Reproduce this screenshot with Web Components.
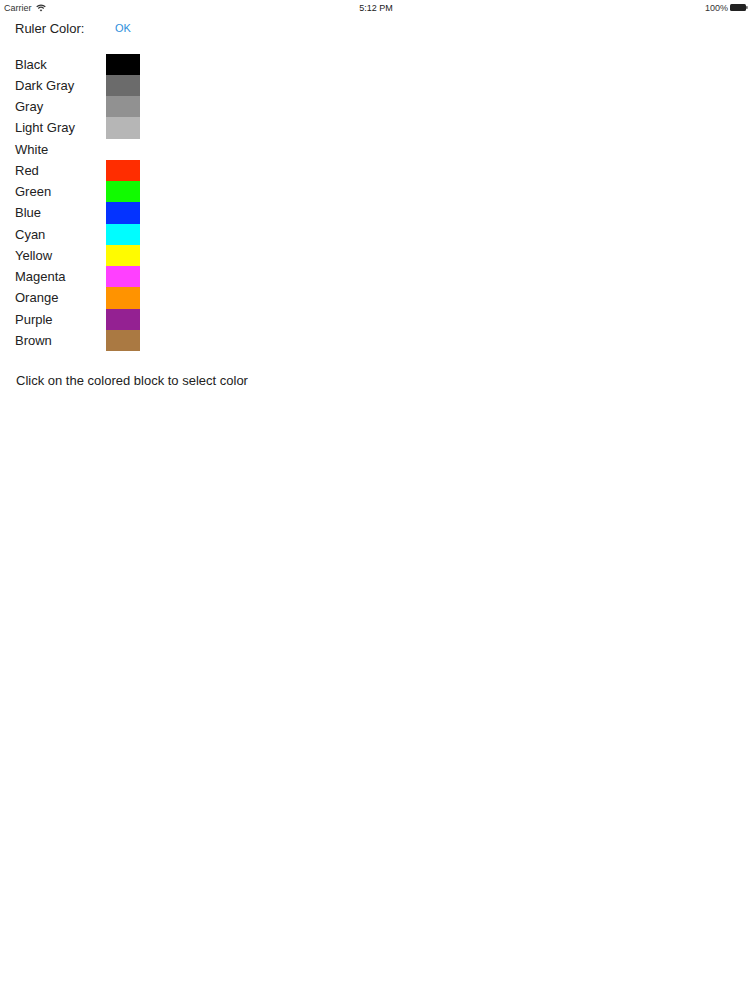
<!DOCTYPE html>
<html>
<head>
<meta charset="utf-8">
<title>Ruler Color</title>
<style>
  html, body { margin: 0; padding: 0; background: #fff; }
  body { width: 750px; height: 1000px; overflow: hidden; font-family: "Liberation Sans", Arial, sans-serif; color: #222; }
</style>
</head>
<body>
<ios-status-bar carrier="Carrier" time="5:12 PM" battery="100%"></ios-status-bar>
<ruler-color-picker>
  <color-row name="Black" color="#000000"></color-row>
  <color-row name="Dark Gray" color="#6b6b6b"></color-row>
  <color-row name="Gray" color="#919191"></color-row>
  <color-row name="Light Gray" color="#b6b6b6"></color-row>
  <color-row name="White" color="#ffffff"></color-row>
  <color-row name="Red" color="#ff2d00"></color-row>
  <color-row name="Green" color="#11fb00"></color-row>
  <color-row name="Blue" color="#0433ff"></color-row>
  <color-row name="Cyan" color="#00fdff"></color-row>
  <color-row name="Yellow" color="#fffb00"></color-row>
  <color-row name="Magenta" color="#ff40ff"></color-row>
  <color-row name="Orange" color="#ff9300"></color-row>
  <color-row name="Purple" color="#942192"></color-row>
  <color-row name="Brown" color="#aa7942"></color-row>
</ruler-color-picker>
<script>
class IosStatusBar extends HTMLElement {
  constructor() {
    super();
    this.attachShadow({ mode: 'open' });
  }

  connectedCallback() {
    this.shadowRoot.innerHTML = `
      <style>
        :host {
          display: grid; grid-template-columns: 1fr auto 1fr; align-items: center;
          height: 15px; padding: 0 2px 0 4px;
          font: 9px "Liberation Sans", Arial, sans-serif; color: #333;
        }
        .left { display: flex; align-items: center; gap: 4px; }
        .right { display: flex; align-items: center; justify-content: flex-end; gap: 2px; }
        .time { font-weight: 400; color: #222; }
        svg { display: block; }
      </style>
      <div class="left">
        <span>${this.getAttribute('carrier')}</span>
        <svg width="10" height="8" viewBox="0 0 10 8" fill="none" stroke="#333" stroke-width="1.2">
          <path d="M.7 2.8a6.2 6.2 0 0 1 8.6 0"/>
          <path d="M2.3 4.5a3.9 3.9 0 0 1 5.4 0"/>
          <path d="M5 7.6 3.7 6.1a1.9 1.9 0 0 1 2.6 0z" fill="#333" stroke="none"/>
        </svg>
      </div>
      <span class="time">${this.getAttribute('time')}</span>
      <div class="right">
        <span>${this.getAttribute('battery')}</span>
        <svg width="18" height="7" viewBox="0 0 18 7">
          <rect width="16" height="7" rx="1.5" fill="#222"/>
          <rect x="16.3" y="2.2" width="1.2" height="2.6" fill="#222"/>
        </svg>
      </div>`;
  }
}

class ColorRow extends HTMLElement {
  constructor() {
    super();
    this.attachShadow({ mode: 'open' });
  }

  connectedCallback() {
    const color = this.getAttribute('color');
    this.shadowRoot.innerHTML = `
      <style>
        :host { display: flex; align-items: center; height: 21.25px; }
        .name { width: 91px; font-size: 13px; }
        .swatch { width: 34px; height: 100%; background: ${color}; cursor: pointer; }
      </style>
      <span class="name">${this.getAttribute('name')}</span>
      <div class="swatch"></div>`;
    // Clicking a block tells the picker which colour was chosen
    this.shadowRoot.querySelector('.swatch').addEventListener('click', () => {
      this.dispatchEvent(new CustomEvent('color-select', { bubbles: true, composed: true, detail: { color } }));
    });
  }
}

class RulerColorPicker extends HTMLElement {
  constructor() {
    super();
    this.attachShadow({ mode: 'open' });
  }

  connectedCallback() {
    this.shadowRoot.innerHTML = `
      <style>
        :host { display: block; padding-left: 15px; font-size: 13px; }
        header { display: flex; align-items: center; height: 26px; }
        .title { width: 100px; }
        .ok { color: #2f8fdc; font-size: 11px; }
        .rows { margin-top: 12.5px; }
        .hint { margin: 19px 0 0 1px; line-height: 21px; font-size: 13px; }
      </style>
      <header>
        <span class="title">Ruler Color:</span>
        <span class="ok">OK</span>
      </header>
      <div class="rows"><slot></slot></div>
      <p class="hint">Click on the colored block to select color</p>`;
  }
}

customElements.define('ios-status-bar', IosStatusBar);
customElements.define('color-row', ColorRow);
customElements.define('ruler-color-picker', RulerColorPicker);
</script>
</body>
</html>
